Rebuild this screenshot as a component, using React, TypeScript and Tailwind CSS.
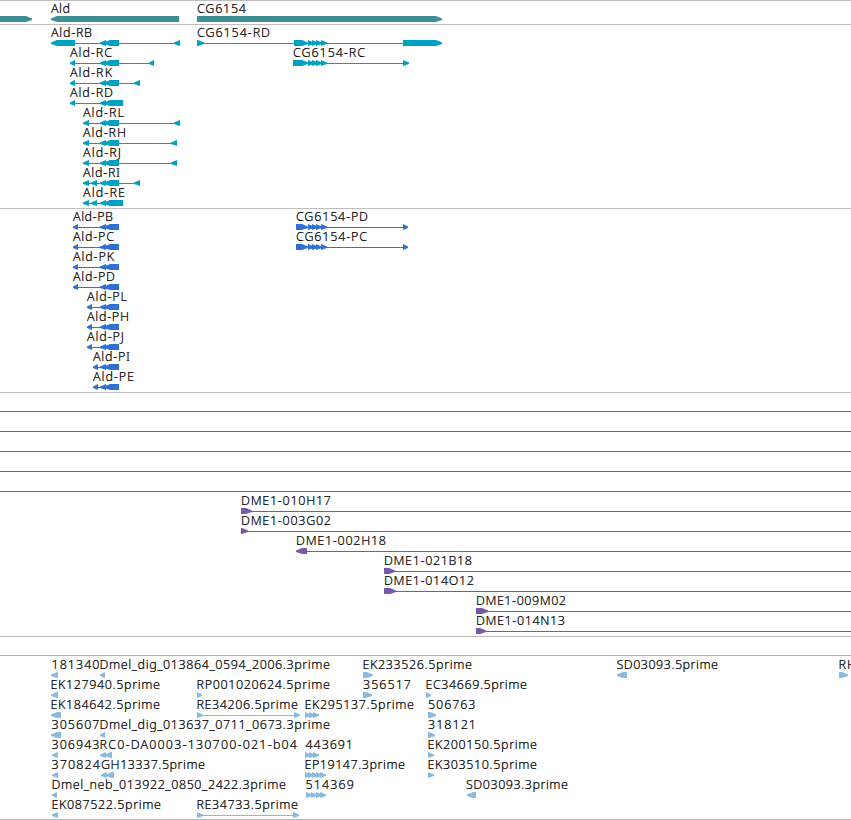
type Dir = 'L' | 'R';

type Feature = {
  label?: string;
  // label start and width on the track
  x?: number;
  w?: number;
  row: number;
  dir: Dir;
  exons: [number, number][];
  span?: [number, number];
};

type TrackProps = {
  color: string;
  height: number;
  // y of the first connector line
  top: number;
  features: Feature[];
};

const WIDTH = 851;
const ROW = 20;

const f = (
  label: string,
  x: number,
  end: number,
  row: number,
  dir: Dir,
  exons: [number, number][],
  span?: [number, number],
): Feature => ({ label, x, w: end - x, row, dir, exons, span });

const genes: Feature[] = [
  { row: 0, dir: 'R', exons: [[-10, 32]] },
  f('Ald', 51, 70, 0, 'L', [[51, 179]]),
  f('CG6154', 197, 246, 0, 'R', [[197, 442]]),
];

const chain: [number, number][] = [
  [308, 314],
  [312, 318],
  [316, 322],
  [321, 327],
];

const transcripts: Feature[] = [
  f('Ald-RB', 51, 92, 0, 'L', [[51, 75], [100, 106], [104, 119], [174, 180]]),
  f('CG6154-RD', 197, 270, 0, 'R', [[197, 204], [294, 308], ...chain, [403, 442]]),
  f('Ald-RC', 70, 112, 1, 'L', [[70, 75], [100, 106], [104, 119], [149, 154]]),
  f('CG6154-RC', 293, 365, 1, 'R', [[293, 308], ...chain, [403, 409]]),
  f('Ald-RK', 70, 112, 2, 'L', [[70, 75], [100, 106], [104, 119], [134, 140]]),
  f('Ald-RD', 70, 113, 3, 'L', [[70, 75], [100, 106], [104, 123]]),
  f('Ald-RL', 83, 124, 4, 'L', [[83, 89], [100, 106], [104, 119], [174, 180]]),
  f('Ald-RH', 83, 126, 5, 'L', [[83, 89], [100, 106], [104, 119], [171, 177]]),
  f('Ald-RJ', 83, 121, 6, 'L', [[83, 89], [100, 106], [104, 119], [171, 177]]),
  f('Ald-RI', 83, 120, 7, 'L', [[83, 89], [91, 97], [100, 106], [104, 119], [134, 140]]),
  f('Ald-RE', 83, 125, 8, 'L', [[83, 89], [91, 97], [100, 106], [104, 123]]),
];

const proteins: Feature[] = [
  f('Ald-PB', 73, 113, 0, 'L', [[73, 78], [100, 106], [104, 119]]),
  f('CG6154-PD', 296, 368, 0, 'R', [[296, 308], ...chain, [403, 408]]),
  f('Ald-PC', 73, 114, 1, 'L', [[73, 78], [100, 106], [104, 119]]),
  f('CG6154-PC', 296, 367, 1, 'R', [[296, 308], ...chain, [403, 408]]),
  f('Ald-PK', 73, 114, 2, 'L', [[73, 78], [100, 106], [104, 119]]),
  f('Ald-PD', 73, 115, 3, 'L', [[73, 78], [100, 106], [104, 119]]),
  f('Ald-PL', 87, 127, 4, 'L', [[87, 92], [100, 106], [104, 119]]),
  f('Ald-PH', 87, 129, 5, 'L', [[87, 92], [100, 106], [104, 119]]),
  f('Ald-PJ', 87, 124, 6, 'L', [[87, 92], [100, 106], [104, 119]]),
  f('Ald-PI', 93, 130, 7, 'L', [[93, 98], [100, 106], [104, 119]]),
  f('Ald-PE', 93, 134, 8, 'L', [[93, 98], [100, 106], [104, 119]]),
];

const clones: Feature[] = [
  ...[0, 1, 2, 3, 4].map(
    (row): Feature => ({ row, dir: 'R', exons: [], span: [0, WIDTH] }),
  ),
  f('DME1-010H17', 241, 331, 5, 'R', [[241, 252]], [241, WIDTH]),
  f('DME1-003G02', 241, 331, 6, 'R', [[241, 248]], [241, WIDTH]),
  f('DME1-002H18', 296, 386, 7, 'L', [[296, 307]], [296, WIDTH]),
  f('DME1-021B18', 384, 472, 8, 'R', [[384, 395]], [384, WIDTH]),
  f('DME1-014O12', 384, 474, 9, 'R', [[384, 396]], [384, WIDTH]),
  f('DME1-009M02', 476, 566, 10, 'R', [[476, 488]], [476, WIDTH]),
  f('DME1-014N13', 476, 565, 11, 'R', [[476, 486]], [476, WIDTH]),
];

const ests: Feature[] = [
  { row: -1, dir: 'R', exons: [], span: [0, WIDTH] },
  f('181340', 51.5, 99.5, 0, 'L', [[51, 58]]),
  f('Dmel_dig_013864_0594_2006.3prime', 99.5, 330, 0, 'L', [[100, 105]]),
  f('EK233526.5prime', 362.5, 472, 0, 'R', [[363, 373]]),
  f('SD03093.5prime', 616.5, 718, 0, 'L', [[617, 627]]),
  f('RH', 838.5, 856, 0, 'R', [[839, 848]]),
  f('EK127940.5prime', 50.5, 160, 1, 'L', [[51, 58]]),
  f('RP001020624.5prime', 196.5, 330, 1, 'R', [[197, 202]]),
  f('356517', 363, 411, 1, 'R', [[363, 372]]),
  f('EC34669.5prime', 425.5, 527, 1, 'R', [[426, 431]]),
  f('EK184642.5prime', 50.5, 160, 2, 'L', [[51, 61]]),
  f('RE34206.5prime', 196.5, 298, 2, 'R', [[197, 203], [294, 300]]),
  f('EK295137.5prime', 304.5, 414, 2, 'R', [[305, 311], [309, 315], [313, 319]]),
  f('506763', 428, 475.5, 2, 'R', [[428, 436]]),
  f('305607', 51.5, 99.5, 3, 'L', [[51, 61]]),
  f('Dmel_dig_013637_0711_0673.3prime', 99.5, 330, 3, 'L', [[100, 105]]),
  f('318121', 428, 476, 3, 'R', [[428, 435]]),
  f('306943', 51.5, 99.5, 4, 'L', [[52, 58]]),
  f('RC0-DA0003-130700-021-b04', 99.5, 297, 4, 'L', [[100, 106], [105, 112]]),
  f('443691', 305.5, 353, 4, 'R', [[305, 311], [309, 315], [313, 319]]),
  f('EK200150.5prime', 427.5, 537, 4, 'R', [[428, 434]]),
  f('370824', 51.5, 100, 5, 'L', [[52, 58]]),
  f('GH13337.5prime', 101, 205, 5, 'L', [[101, 107], [106, 114]]),
  f('EP19147.3prime', 304.5, 405, 5, 'R', [[305, 311], [308, 314], [312, 318], [316, 322], [320, 326]]),
  f('EK303510.5prime', 427.5, 537, 5, 'R', [[428, 434]]),
  f('Dmel_neb_013922_0850_2422.3prime', 51.5, 286, 6, 'L', [[52, 57]]),
  f('514369', 305.5, 354, 6, 'R', [[306, 312], [311, 317], [316, 322], [320, 326]]),
  f('SD03093.3prime', 466, 568, 6, 'L', [[467, 476]]),
  f('EK087522.5prime', 51.5, 161, 7, 'L', [[52, 58]]),
  f('RE34733.5prime', 196.5, 298, 7, 'R', [[197, 203], [293, 299]]),
];

// block with a pointed end, 6px tall around the connector line
function arrow([a, b]: [number, number], y: number, dir: Dir) {
  const head = Math.min(b - a, 6);
  const tip = dir === 'L' ? a : b;
  const back = dir === 'L' ? b : a;
  const neck = dir === 'L' ? a + head : b - head;
  return `M${tip} ${y - 0.4}L${neck} ${y - 3}H${back}V${y + 3}H${neck}L${tip} ${y + 1}Z`;
}

function Track({ color, height, top, features }: TrackProps) {
  return (
    <section className="border-t border-[#bebebe]">
      <svg
        width={WIDTH}
        height={height - 1}
        className="block overflow-hidden"
        fontFamily="'Noto Sans', 'Open Sans', sans-serif"
        fontSize="12.5"
        fontWeight="300"
      >
        {features.map((ft, i) => {
          const y = top + ft.row * ROW;
          const last = ft.exons[ft.exons.length - 1];
          const [from, to] = ft.span ?? [ft.exons[0][0], last[1]];
          return (
            <g key={i} fill={color}>
              {(ft.span || ft.exons.length > 1) && (
                <rect x={from} y={y} width={to - from} height={1} />
              )}
              {ft.exons.map((ex) => (
                <path key={ex[0]} d={arrow(ex, y, ft.dir)} />
              ))}
              {ft.label && (
                <text
                  x={ft.x}
                  y={y - 6}
                  textLength={ft.w}
                  fill="#000"
                  stroke="#000"
                  strokeWidth={0.22}
                >
                  {ft.label}
                </text>
              )}
            </g>
          );
        })}
      </svg>
    </section>
  );
}

export default function App() {
  return (
    <main className="flex h-[820px] w-[851px] flex-col overflow-hidden border-b border-[#bebebe] bg-white">
      <Track color="#3f8e94" height={24} top={18} features={genes} />
      <Track color="#00a0c0" height={184} top={18} features={transcripts} />
      <Track color="#3070d0" height={184} top={18} features={proteins} />
      <Track color="#7858a8" height={244} top={18} features={clones} />
      <Track color="#88bbdd" height={183} top={18 + ROW} features={ests} />
    </main>
  );
}
